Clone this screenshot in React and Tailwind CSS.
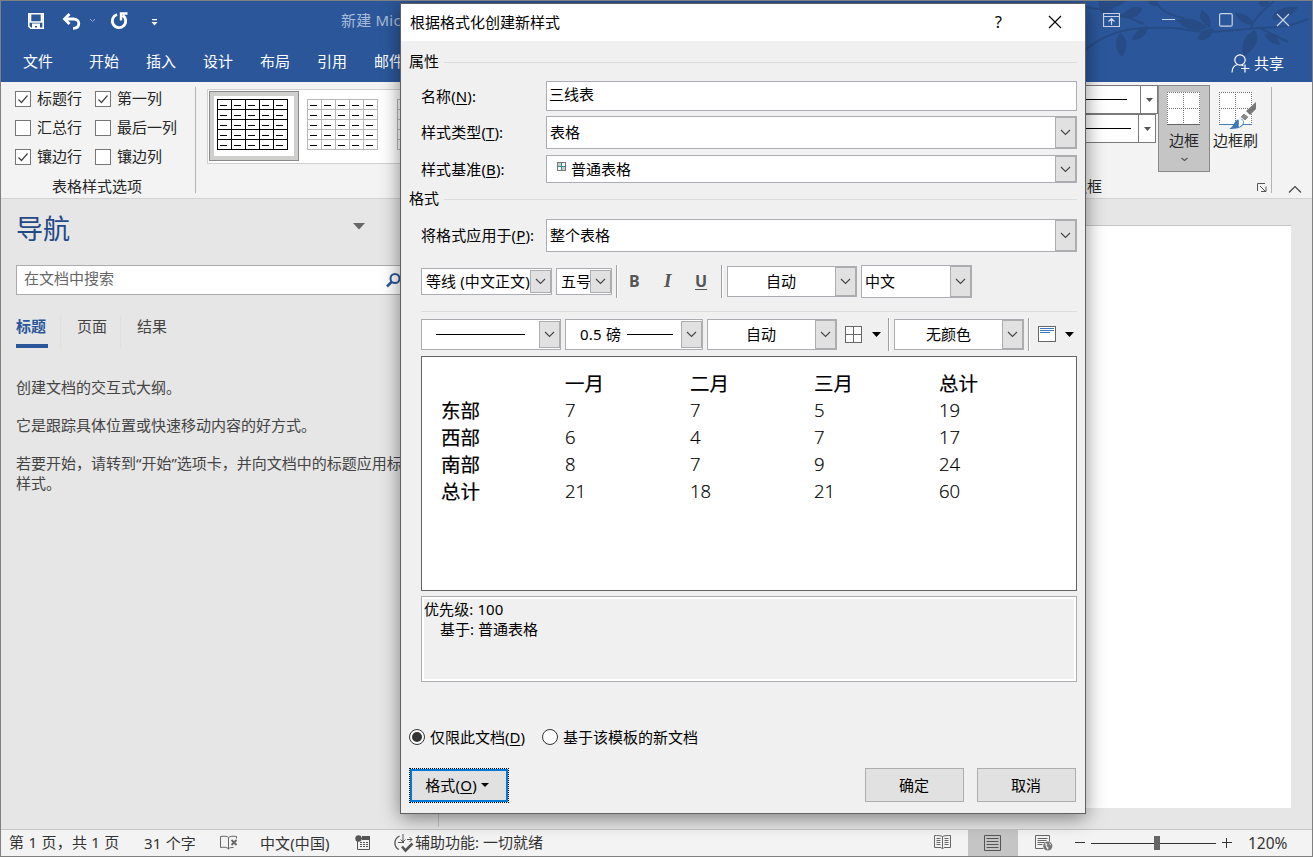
const TABS = ['开始', '插入', '设计', '布局', '引用', '邮件']

const OPTIONS = [
	{ label: '标题行', checked: true },
	{ label: '第一列', checked: true },
	{ label: '汇总行', checked: false },
	{ label: '最后一列', checked: false },
	{ label: '镶边行', checked: true },
	{ label: '镶边列', checked: false },
]

const PREVIEW = [
	['', '一月', '二月', '三月', '总计'],
	['东部', '7', '7', '5', '19'],
	['西部', '6', '4', '7', '17'],
	['南部', '8', '7', '9', '24'],
	['总计', '21', '18', '21', '60'],
]

export default function App() {
	return (
		<div className="relative w-[1313px] h-[857px] overflow-hidden flex flex-col border border-[#808080] bg-[#e6e6e6] text-[15px] leading-5 text-[#262626] whitespace-nowrap font-['Noto_Sans','Noto_Sans_CJK_SC',sans-serif]">
			<TitleBar />
			<Ribbon />
			<div className="flex-1 flex min-h-0">
				<NavPane />
				<main className="flex-1 pt-[26px] pr-[21px]">
					<div className="h-[583px] bg-white border-t border-[#c6c6c6]" />
				</main>
			</div>
			<StatusBar />
			<StyleDialog />
		</div>
	)
}

function TitleBar() {
	return (
		<header className="relative h-[81px] shrink-0 bg-[#2b579a] text-white">
			<Branches />
			<div className="relative flex items-center h-10 pl-[27px]">
				<svg width="16" height="16" viewBox="0 0 16 16" fill="none" stroke="#fff" strokeWidth="1.6">
					<path d="M.8.8h14.4v14.4H2.8l-2-2zM2.5 1v8h11V1" />
					<path d="M4 10.5h8V16H9v-3H7v3H4z" fill="#fff" stroke="none" />
				</svg>
				<svg className="ml-[18px]" width="19" height="17" viewBox="0 0 19 17" fill="none" stroke="#fff" strokeWidth="2.8">
					<path d="M7.500 1L2.500 6l5 5M2.500 6h9c3.300 0 5.300 1.900 5.300 4.500S15 15.300 11 15.300" />
				</svg>
				<svg className="ml-[8px] -mt-0.5" width="7" height="5" viewBox="0 0 7 5" fill="none" stroke="#95abcd">
					<path d="M1 1l2.500 2.500L6 1" />
				</svg>
				<svg className="ml-[14px]" width="19" height="18" viewBox="0 0 19 18" fill="none" stroke="#fff" strokeWidth="2.8">
					<path d="M7 2.500A6.700 6.700 0 1 0 12.500 3.200" />
					<path d="M11 8.500V1.500h6.500" strokeWidth="2.4" />
				</svg>
				<svg className="ml-[22px] mt-1" width="7" height="8" viewBox="0 0 7 8" fill="#fff">
					<path d="M1 0h5v1.300H1zM.5 3h6L3.500 6.500z" />
				</svg>
				<span className="ml-[183px] w-[60px] overflow-hidden -mt-0.5 text-[#a9bcd9] tracking-[0.2px]">新建 Mic</span>
				<div className="ml-auto flex items-center pr-[22px] -mt-0.5 text-[#c9d5e7]">
					<svg width="17" height="14" viewBox="0 0 17 14" fill="none" stroke="currentColor" strokeWidth="1.200">
						<path d="M.5.5h16v13H.5zM.5 3.500h16M8.500 12V5.500M5.500 8.500l3-3 3 3" />
					</svg>
					<svg className="ml-[42px]" width="13" height="14" viewBox="0 0 13 14" stroke="currentColor"><path d="M0 6.500h13" /></svg>
					<svg className="ml-[44px]" width="14" height="14" viewBox="0 0 14 14" fill="none" stroke="currentColor" strokeWidth="1.200"><rect x=".6" y=".6" width="12.600" height="12.600" rx="1.500" /></svg>
					<svg className="ml-[43px]" width="14" height="14" viewBox="0 0 14 14" stroke="currentColor" strokeWidth="1.200"><path d="M1 1l12 12M13 1L1 13" /></svg>
				</div>
			</div>
			<nav className="relative flex items-center h-10 pl-[22px]">
				<span>文件</span>
				<div className="ml-[36px] flex gap-[27px]">
					{TABS.map(t => <span key={t}>{t}</span>)}
				</div>
				<div className="ml-auto mr-[28px] mt-1 flex items-center gap-1">
					<svg width="19" height="19" viewBox="0 0 19 19" fill="none" stroke="#fff" strokeWidth="1.200">
						<circle cx="9" cy="6" r="5.200" />
						<path d="M1 18.500c0-4 2.200-7 5.500-8M14 10.500v8M10 14.500h8.500M10.500 11l2 1" />
					</svg>
					<span>共享</span>
				</div>
			</nav>
		</header>
	)
}

function Branches() {
	return (
		<svg className="absolute right-0 top-0" width="252" height="60" viewBox="0 0 252 60" fill="#274c85">
			<path d="M24 50C38 38 58 28 84 27S118 27 134 30s48-2 64-3 30 0 50-9M24 6c20 2 40 8 60 17M96 0c4 9 12 14 28 17M190 28c4-10 14-20 24-28M200 27l28 14" fill="none" stroke="#274c85" strokeWidth="2" />
			<path d="M38 0c2 8 0 12 8 14 6-4 10-8 8-14zM60 16c8-10 18-12 22-8-3 9-12 11-22 8zM60 32c9 6 8 16 2 24-6-6-9-14-2-24zM72 39c3-10 10-13 16-14 0 8-6 14-16 14zM50 8c8-2 14-6 16-8H52zM116 19c14-4 24 0 32 8-14 5-23 1-32-8zM150 27c-10-6-12-12-8-18 7 4 10 10 8 18zM137 38c4-8 10-11 16-10 0 8-8 13-16 10zM195 29c6 10 0 18-11 27-4-13 0-22 11-27zM205 33c8-2 14 4 15 11-8-1-13-4-15-11zM175 12c10 0 17 4 19 12-10 0-15-4-19-12zM212 18c2-9 12-13 26-12-6 9-15 15-26 12zM202 6c-4-3-3-5-2-6h9c0 3-2 5-7 6zM98 5c-6 0-9-2-10-5h9z" />
		</svg>
	)
}

function Ribbon() {
	return (
		<section className="h-[117px] shrink-0 flex bg-[#f3f3f3] border-b border-[#d2d2d2]">
			<div className="w-[195px] h-[106px] mt-[5px] border-r border-[#b3b3b3] shrink-0 flex flex-col">
				<div className="pl-[14px] -mt-[3px] grid grid-cols-[80px_1fr]">
					{OPTIONS.map(o => (
						<div key={o.label} className="h-[29px] flex items-center gap-[6px]">
							<span className="size-4 bg-white border border-[#777]">
								{o.checked && <svg width="14" height="14" viewBox="0 0 14 14" fill="none" stroke="#444" strokeWidth="1.200"><path d="M2.500 7.500l3 3 6-7" /></svg>}
							</span>
							<span className="-mt-0.5">{o.label}</span>
						</div>
					))}
				</div>
				<span className="mt-[5px] pr-0.5 text-center">表格样式选项</span>
			</div>
			<div className="ml-[11px] mt-[7px] w-[400px] h-[75px] bg-white border border-[#d0d0d0] flex gap-[8px] p-px overflow-hidden">
				<div className="w-[90px] h-[70px] shrink-0 border border-[#8a8a8a] bg-[#cfcfcd] p-1">
					<div className="h-[60px] bg-white p-[3px]"><TableThumb color="#000" /></div>
				</div>
				<div className="shrink-0 pt-2"><TableThumb color="#b8b8b8" /></div>
				<div className="shrink-0 pt-2 ml-[10px]"><TableThumb color="#b8b8b8" /></div>
			</div>
			<div className="ml-auto flex pt-[3px]">
				<div className="w-[97px] flex flex-col">
					<LineCombo width="w-[97px]" line="w-[65px]" arrow="w-[17px]" />
					<LineCombo width="w-[95px]" line="w-[69px]" arrow="w-[17px]" />
					<span className="mt-[33px] pl-[11px]">边框</span>
				</div>
				<div className="w-[52px] h-[87px] bg-[#c5c5c5] border border-[#8a8a8a] flex flex-col items-center pt-1.5">
					<BorderIcon />
					<span>边框</span>
					<svg className="mt-[7px]" width="7" height="5" viewBox="0 0 7 5" fill="none" stroke="#555" strokeWidth="1.200"><path d="M.5 1l3 2.500 3-2.500" /></svg>
				</div>
				<div className="w-[61px] pl-[3px] pt-[7px]">
					<div className="pl-[6px]"><BorderIcon brush /></div>
					<div>边框刷</div>
					<svg className="ml-[44px] mt-[33px]" width="10" height="9" viewBox="0 0 10 9" fill="none" stroke="#555"><path d="M.5 8V.5H8M3 3l5 5M9 3.500V8.500H4" /></svg>
				</div>
				<div className="w-[41px] h-[106px] mt-[2px] border-l border-[#b3b3b3] flex items-end pl-[16px]">
					<svg width="14" height="8" viewBox="0 0 14 8" fill="none" stroke="#444" strokeWidth="1.200"><path d="M1 7.500l6-6 6 6" /></svg>
				</div>
			</div>
		</section>
	)
}

function TableThumb({ color }) {
	return (
		<svg className="block" width="72" height="52" viewBox="0 0 72 52" fill="none" shapeRendering="crispEdges">
			<path d="M.5.500h70v50H.500zM.500 10.500h70M.500 20.500h70M.500 30.500h70M.500 40.500h70M14.500.500v50M28.500.500v50M42.500.500v50M56.500.500v50" stroke={color} />
			{[6.5, 16.5, 26.5, 36.5, 46.5].map(y => <path key={y} d={`M3 ${y}h67`} stroke="#000" strokeDasharray="7 7" />)}
		</svg>
	)
}

function LineCombo({ width, line, arrow }) {
	return (
		<div className={`${width} h-[29px] bg-white border border-[#7a7a7a] flex`}>
			<div className="flex-1 flex items-center"><div className={`${line} h-px bg-black`} /></div>
			<div className={`${arrow} border-l border-[#7a7a7a] flex items-center justify-center`}>
				<svg width="7" height="4" viewBox="0 0 7 4" fill="#555"><path d="M0 0h7L3.500 4z" /></svg>
			</div>
		</div>
	)
}

function BorderIcon({ brush }) {
	return (
		<svg className="block" width="38" height="38" viewBox="0 0 38 38" fill="none">
			<path d={brush ? 'M0 0h33v33H0z' : 'M2 0h33v33H2z'} fill="#fff" />
			{brush ? (
				<>
					<path d="M0 .5h33M0 16.500h33M.5 0v33M16.500 0v33M32.500 0v33" stroke="#777" strokeDasharray="1 1" shapeRendering="crispEdges" />
					<path d="M0 32.500h33" stroke="#4a7ebb" shapeRendering="crispEdges" />
					<path d="M37 10v7l-6 6-4-4z" fill="#777" />
					<path d="M25 21l5 4-4 4-5-4z" fill="#8a8a8a" stroke="#fff" strokeWidth="1" />
					<path d="M10 37c5-2 5-9 10-10 4-1 6 3 4 6-2 3-7 4-14 4z" fill="#3e77b6" />
					<path d="M19 27c2-1 6 1 5 4-1 3-3 3-4 4-1-3 1-5-1-8z" fill="#fff" />
				</>
			) : (
				<>
					<path d="M2 .5h33M2 16.500h33M2.500 0v33M18.500 0v33M34.500 0v33" stroke="#777" strokeDasharray="1 1" shapeRendering="crispEdges" />
					<path d="M2 32.500h33" stroke="#666" shapeRendering="crispEdges" />
				</>
			)}
		</svg>
	)
}

function NavPane() {
	return (
		<aside className="w-[438px] shrink-0 border-r border-[#c3c3c3] mb-[2px] pl-[15px] text-[#444]">
			<div className="flex items-center h-[60px]">
				<h2 className="text-[27px] leading-[60px] text-[#1f4a85]">导航</h2>
				<svg className="ml-[283px] -mt-1.5" width="12" height="7" viewBox="0 0 12 7" fill="#666"><path d="M0 0h12L6 6.500z" /></svg>
			</div>
			<div className="mt-[6px] h-[30px] w-[393px] bg-white border border-[#ababab] flex items-center pl-[7px]">
				<span className="-mt-1 text-[#666]">在文档中搜索</span>
				<svg className="ml-[272px]" width="15" height="15" viewBox="0 0 15 15" fill="none" stroke="#2b579a" strokeWidth="2"><circle cx="9" cy="5.500" r="4.500" /><path d="M6 8.500L1 13.500" strokeWidth="2.500" /></svg>
			</div>
			<div className="mt-[21px] flex text-[#444]">
				<div className="w-11 flex">
					<span className="font-bold text-[#2b579a] border-b-4 border-[#2b579a] pr-0.5 pb-2">标题</span>
				</div>
				<span className="border-l border-[#dfdfdf] pl-4 w-[60px]">页面</span>
				<span className="border-l border-[#dfdfdf] pl-4">结果</span>
			</div>
			<div className="mt-[29px] space-y-[18px]">
				<p>创建文档的交互式大纲。</p>
				<p>它是跟踪具体位置或快速移动内容的好方式。</p>
				<p>若要开始，请转到“开始”选项卡，并向文档中的标题应用标题<br />样式。</p>
			</div>
		</aside>
	)
}

function StatusBar() {
	return (
		<footer className="h-[27px] shrink-0 flex items-center bg-[#f3f3f3] border-t border-[#c6c6c6] pl-2 text-[#333]">
			<span className="w-[135px] -mt-0.5 tracking-[0.25px]">第 1 页，共 1 页</span>
			<span className="w-[76px] tracking-[0.2px]">31 个字</span>
			<svg className="-mt-0.5" width="18" height="15" viewBox="0 0 18 15" fill="none" stroke="#666">
				<path d="M8.500 2.500C7 1 4 1 .5 1.500v11c3.500-.5 6.500-.5 8 1.500V2.500C10 1 13 1 16.500 1.500v2M8.500 14c1-1.500 3-1.500 5-1.500" />
				<path d="M11.500 5l5 5M16.500 5l-5 5" strokeWidth="1.800" />
			</svg>
			<span className="ml-[22px] w-[95px] tracking-[0.1px]">中文(中国)</span>
			<svg className="-mt-0.5" width="16" height="15" viewBox="0 0 16 15" fill="none" stroke="#555">
				<path d="M2.500 6v8.500h12V3.500H6" />
				<path d="M7 1h8v4H7z" fill="#555" stroke="none" />
				<circle cx="3.500" cy="3.500" r="3.200" fill="#555" stroke="none" />
				<path d="M5 7.500h9M5 9.500h9M5 11.500h9" strokeDasharray="2 1" />
			</svg>
			<svg className="ml-[23px]" width="20" height="19" viewBox="0 0 20 19" fill="none" stroke="#555">
				<path d="M5.500 2C-.5 5-.5 13 5 15.500" strokeWidth="1.300" />
				<path d="M9 0v8M6.500 5.500L9 8l2.500-2.500M13 5.500h5M15.500 3l2.500 2.500L15.500 8M4 8.500h6" />
				<path d="M8 12.500l3.500 4 7-7" strokeWidth="2.600" />
			</svg>
			<span className="ml-px -mt-0.5">辅助功能: 一切就绪</span>
			<div className="ml-auto flex items-center h-full">
				<svg className="mr-[17px] -mt-0.5" width="17" height="15" viewBox="0 0 17 15" fill="none" stroke="#666">
					<path d="M8.500 1.500C7 .500 3 .500.500.500v12h6.500l1.500 1.500 1.500-1.500h6.500V.500c-3 0-6.500 0-8 1v12" />
					<path d="M2.500 3.500h4M2.500 5.500h4M2.500 7.500h4M2.500 9.500h4M10.500 3.500h4M10.500 5.500h4M10.500 7.500h4M10.500 9.500h4" />
				</svg>
				<div className="w-[50px] h-full bg-[#c5c5c5] flex items-center justify-center">
					<svg className="-ml-px" width="17" height="16" viewBox="0 0 17 16" fill="none" stroke="#555"><path d="M.5.500h16v15H.500zM2.500 3.500h12M2.500 6.500h12M2.500 9.500h12M2.500 12.500h12" /></svg>
				</div>
				<svg className="ml-[17px]" width="18" height="16" viewBox="0 0 18 16" fill="none" stroke="#666">
					<path d="M8.500 13.500h-8V.500h14v6M2.500 3.500h10M2.500 5.500h9M2.500 7.500h7M2.500 9.500h5" />
					<circle cx="12.800" cy="11" r="4.600" fill="#777" stroke="none" />
					<path d="M10 8l2.500 1-1 2 2 1.500-.5 2.500L11 12zM14 7.500l2 2-1 1z" fill="#eee" stroke="none" />
				</svg>
				<svg className="ml-[22px] -mt-0.5" width="10" height="9" viewBox="0 0 10 9" stroke="#333"><path d="M0 4.500h10" /></svg>
				<div className="ml-[6px] w-[125px] flex items-center">
					<div className="w-[63px] h-px bg-[#333]" />
					<div className="w-[6px] h-[14px] bg-[#666]" />
					<div className="flex-1 h-px bg-[#333]" />
				</div>
				<svg className="ml-[6px]" width="10" height="10" viewBox="0 0 10 10" stroke="#333"><path d="M0 4.500h10M4.500 0v10" /></svg>
				<span className="ml-[16px] w-[64px] text-[15.5px]">120%</span>
			</div>
		</footer>
	)
}

function Chevron() {
	return <svg width="11" height="7" viewBox="0 0 11 7" fill="none" stroke="#444" strokeWidth="1.100"><path d="M1 1l4.500 4.500L10 1" /></svg>
}

// flat variant leaves a white gap between the button and the frame
function Combo({ className, children, flat }) {
	return (
		<div className={`${className} shrink-0 bg-white border border-[#abadb3] flex`}>
			<div className="flex-1 min-w-0 flex items-center">{children}</div>
			<div className={`${flat ? 'w-[21px] my-px' : 'w-[21px]'} shrink-0 bg-[#e1e1e1] border border-[#adadad] flex items-center justify-center`}>
				<Chevron />
			</div>
		</div>
	)
}

function Section({ title }) {
	return (
		<div className="h-5 flex items-center gap-[5px] pl-2 pr-2">
			<span className="-mt-0.5">{title}</span>
			<div className="flex-1 h-px bg-[#dcdcdc]" />
		</div>
	)
}

function Field({ label, hotkey, className, children }) {
	return (
		<div className={`${className} flex items-center pl-5`}>
			<span className="w-[125px] shrink-0 -mt-px tracking-[0.1px]">{label}(<span className="underline underline-offset-2">{hotkey}</span>):</span>
			{children}
		</div>
	)
}

function Separator() {
	return <div className="w-0.5 h-[33px] shrink-0 bg-[#a0a0a0] border-r border-white" />
}

function DownArrow() {
	return <svg width="9" height="5" viewBox="0 0 9 5" fill="#000"><path d="M0 0h9L4.500 5z" /></svg>
}

function StyleDialog() {
	return (
		<div className="absolute left-[399px] top-[2px] w-[686px] h-[811px] bg-[#f0f0f0] border border-[#606060] text-black flex flex-col shadow-[0_4px_18px_rgba(0,0,0,0.45)]">
			<div className="h-[37px] shrink-0 bg-white flex items-center pl-[9px] pr-[23px] pb-0.5">
				<span>根据格式化创建新样式</span>
				<span className="ml-auto text-[16px]">?</span>
				<svg className="ml-[46px]" width="14" height="14" viewBox="0 0 14 14" stroke="#000" strokeWidth="1.100"><path d="M1 1l12 12M13 1L1 13" /></svg>
			</div>

			<div className="mt-[11px]"><Section title="属性" /></div>
			<Field label="名称" hotkey="N" className="mt-[9px] h-[30px]">
				<div className="w-[531px] h-[30px] bg-white border border-[#abadb3] pl-[2px] pt-[2px]">三线表</div>
			</Field>
			<Field label="样式类型" hotkey="T" className="mt-[5px] h-[33px]">
				<Combo className="w-[531px] h-[33px] pl-[3px]"><span className="-mt-0.5">表格</span></Combo>
			</Field>
			<Field label="样式基准" hotkey="B" className="mt-[6px] h-[28px]">
				<Combo className="w-[531px] h-[28px] pl-[10px]">
					<svg className="mr-[5px] -mt-1.5" width="9" height="9" viewBox="0 0 9 9" fill="none" shapeRendering="crispEdges">
						<path d="M.5.500h8v8h-8z" fill="#fff" stroke="#777" />
						<path d="M1 1h3v3H1zM5 5h3v3H5z" fill="#ccc" />
						<path d="M4.500 1v7M1 4.500h7" stroke="#2a9090" />
					</svg>
					普通表格
				</Combo>
			</Field>
			<div className="mt-[6px]"><Section title="格式" /></div>
			<Field label="将格式应用于" hotkey="P" className="mt-[10px] h-[33px]">
				<Combo className="w-[531px] h-[33px] pl-[3px]"><span className="-mt-0.5">整个表格</span></Combo>
			</Field>

			<div className="mt-[13px] h-[33px] flex items-center pl-5">
				<Combo flat className="w-[131px] h-[27px] pl-1"><span className="-mt-0.5 tracking-[0.1px]">等线 (中文正文)</span></Combo>
				<Combo flat className="ml-1 w-[56px] h-[27px] pl-1"><span className="-mt-0.5">五号</span></Combo>
				<div className="ml-1"><Separator /></div>
				<span className="ml-[11px] -mt-0.5 w-[12px] font-bold text-[#555] text-[16px]">B</span>
				<span className="ml-[23px] -mt-0.5 w-[11px] font-bold italic text-[#555] font-['Liberation_Serif'] text-[19px]">I</span>
				<span className="ml-[20px] -mt-0.5 w-[13px] font-bold text-[#555] text-[16px] underline underline-offset-2 decoration-1">U</span>
				<div className="ml-[13px]"><Separator /></div>
				<Combo className="ml-1 w-[130px] h-[31px]"><span className="w-full -mt-0.5 pr-px text-center">自动</span></Combo>
				<Combo className="ml-1 w-[111px] h-[33px] pl-[3px]"><span className="-mt-0.5">中文</span></Combo>
			</div>
			<div className="mt-[13px] ml-5 mr-2 h-px shrink-0 bg-[#dcdcdc]" />
			<div className="mt-[6px] h-[33px] flex items-center pl-5">
				<Combo flat className="w-[140px] h-[31px]"><div className="ml-[14px] w-[89px] h-px bg-black" /></Combo>
				<Combo flat className="ml-1 w-[138px] h-[31px] pl-[14px]">
					<span className="-mt-0.5 tracking-[0.2px]">0.5 磅</span>
					<div className="ml-[6px] w-[46px] h-px bg-black" />
				</Combo>
				<Combo className="ml-1 w-[130px] h-[31px]"><span className="w-full -mt-0.5 pr-px text-center">自动</span></Combo>
				<svg className="ml-2 mr-[10px] -mt-px" width="17" height="17" viewBox="0 0 17 17" fill="#fff" stroke="#666" shapeRendering="crispEdges"><path d="M.5.500h16v16H.500zM8.500.500v16M.500 8.500h16" /></svg>
				<DownArrow />
				<div className="ml-[7px]"><Separator /></div>
				<Combo className="ml-1 w-[130px] h-[31px]"><span className="w-full -mt-0.5 text-center">无颜色</span></Combo>
				<div className="ml-1"><Separator /></div>
				<svg className="ml-2 mr-[9px] -mt-px" width="18" height="16" viewBox="0 0 18 16" fill="none" shapeRendering="crispEdges">
					<path d="M.5.500h17v15H.500z" fill="#fff" stroke="#666" />
					<path d="M2 2.500h14M2 4.500h14M2 6.500h10" stroke="#3a78c0" />
				</svg>
				<DownArrow />
			</div>

			<div className="mt-[5px] ml-5 w-[656px] h-[235px] shrink-0 bg-white border border-[#646464] pt-[13px] pl-[19px] text-[19.5px] leading-[27px]">
				{PREVIEW.map((row, i) => (
					<div key={i} className="grid grid-cols-[124px_125px_124px_125px_1fr] h-[27px]">
						{row.map((cell, j) => (
							<span key={j} className={i === 0 || j === 0 ? '[-webkit-text-stroke:0.2px_#000]' : "-mt-px font-light font-['Open_Sans','Noto_Sans',sans-serif] text-[18.5px] [-webkit-text-stroke:0.2px_#000]"}>{cell}</span>
						))}
					</div>
				))}
			</div>
			<div className="mt-[5px] ml-5 w-[656px] h-[86px] shrink-0 border border-[#abadb3] shadow-[inset_0_0_0_2px_#fff] pt-[2px] pl-[2px]">
				<div className="tracking-[0.1px]">优先级: 100</div>
				<div className="pl-[16px]">基于: 普通表格</div>
			</div>

			<div className="mt-[45px] flex items-center pl-2">
				<span className="size-4 rounded-full bg-white border border-[#333] flex items-center justify-center"><span className="size-[10px] rounded-full bg-[#333]" /></span>
				<span className="ml-[5px] w-[96px]">仅限此文档(<span className="underline underline-offset-2">D</span>)</span>
				<span className="ml-4 size-4 rounded-full bg-white border border-[#333]" />
				<span className="ml-[5px]">基于该模板的新文档</span>
			</div>
			<div className="mt-[21px] flex pl-2">
				<div className="border border-dotted border-black w-[100px] h-[35px]">
					<button className="w-full h-full border-2 border-[#0078d7] bg-[#e1e1e1] flex items-center justify-center gap-1 pr-1 pb-px">
						<span className="tracking-[0.2px]">格式(<span className="underline underline-offset-2">O</span>)</span>
						<svg width="8" height="4" viewBox="0 0 8 4"><path d="M0 0h8L4 4z" /></svg>
					</button>
				</div>
				<button className="ml-[356px] w-[99px] h-[34px] border border-[#adadad] bg-[#e1e1e1] pb-px pr-px">确定</button>
				<button className="ml-[13px] w-[99px] h-[34px] border border-[#adadad] bg-[#e1e1e1] pb-px pr-px">取消</button>
			</div>
		</div>
	)
}
